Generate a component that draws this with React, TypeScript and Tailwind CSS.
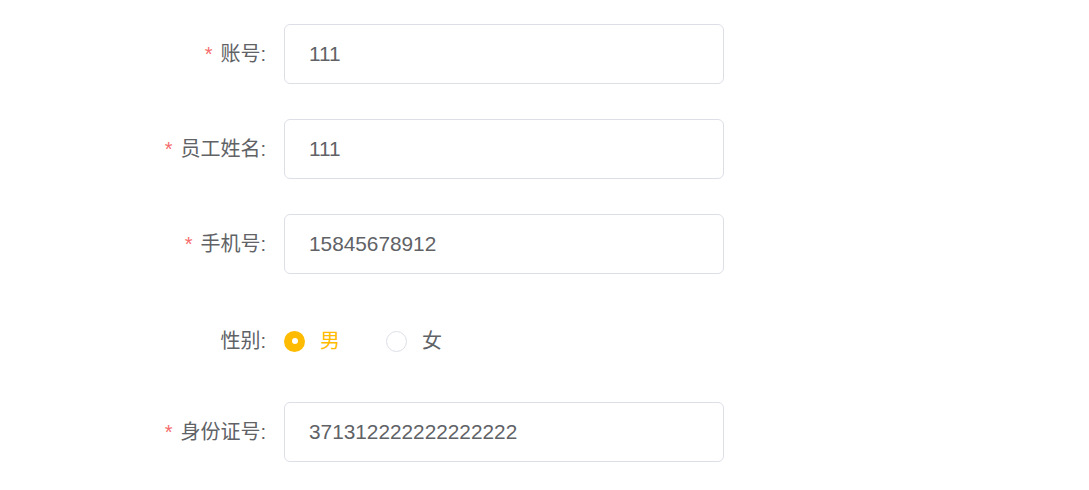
import React from "react";

const font = { fontFamily: '"Liberation Sans", "Noto Sans CJK SC", sans-serif' };

function Label({ text, required }: { text: string; required?: boolean }) {
  return (
    <div className="w-[266px] shrink-0 text-right text-[20px] leading-none text-[#606266]">
      {required && <span className="mr-[8px] text-[#f56c6c]">*</span>}
      {text}:
    </div>
  );
}

function InputRow({ label, value, className }: { label: string; value: string; className?: string }) {
  return (
    <div className={"flex items-center " + (className ?? "")}>
      <Label text={label} required />
      <input
        readOnly
        defaultValue={value}
        className="ml-[18px] h-[60px] w-[440px] rounded-[6px] border border-[#dcdfe6] bg-white pl-[24px] text-[20.8px] text-[#606266] outline-none"
        style={font}
      />
    </div>
  );
}

export default function App() {
  return (
    <div className="h-[490px] w-[1089px] bg-white pt-[24px]" style={font}>
      <InputRow label="账号" value="111" />
      <InputRow label="员工姓名" value="111" className="mt-[35px]" />
      <InputRow label="手机号" value="15845678912" className="mt-[35px]" />
      <div className="mt-[38px] flex h-[58px] items-center">
        <Label text="性别" />
        <div className="ml-[18px] flex items-center">
          <span className="flex h-[21px] w-[21px] items-center justify-center rounded-full bg-[#ffbb00]">
            <span className="h-[6px] w-[6px] rounded-full bg-white" />
          </span>
          <span className="ml-[15px] text-[20px] leading-none text-[#ffbb00]">男</span>
          <span className="ml-[46px] h-[21px] w-[21px] rounded-full border border-[#dcdfe6] bg-white" />
          <span className="ml-[15px] text-[20px] leading-none text-[#606266]">女</span>
        </div>
      </div>
      <InputRow label="身份证号" value="371312222222222222" className="mt-[32px]" />
    </div>
  );
}
